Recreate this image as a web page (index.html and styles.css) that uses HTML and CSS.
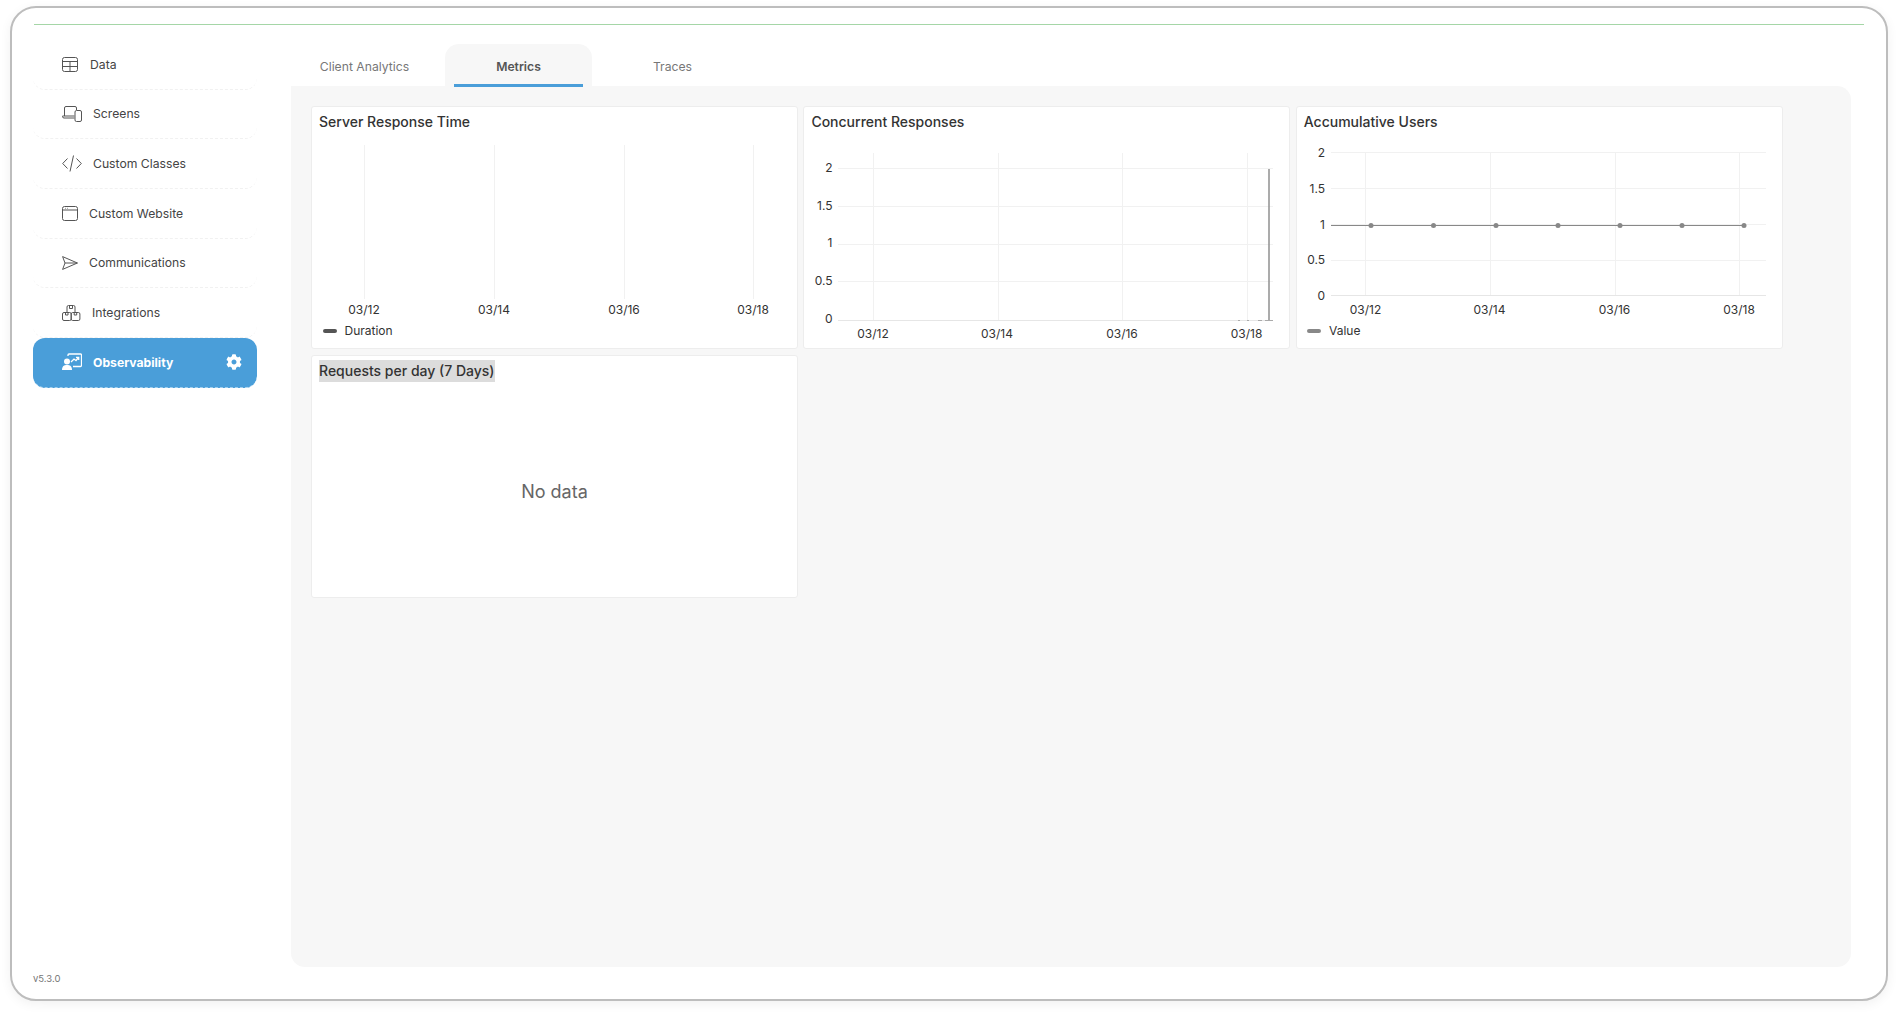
FILE: index.html
```html
<!DOCTYPE html>
<html lang="en">
<head>
<meta charset="utf-8">
<title>Observability</title>
<link rel="stylesheet" href="styles.css">
</head>
<body>
<div class="frame">
  <div class="topline"></div>
  <div class="shell">
    <aside class="sidebar">
      <nav class="nav">
        <a class="nav-item"><svg class="ic" width="17" height="15" viewBox="0 0 17 15"><rect x=".5" y=".5" width="15" height="14" rx="2"/><path d="M.5 4.500h15M.5 9.500h15M8 4.500v10"/></svg><span>Data</span></a>
        <a class="nav-item"><svg class="ic" width="20" height="16" viewBox="0 0 20 16"><path d="M2.500 10V2a1.500 1.500 0 0 1 1.500-1.500h9A1.500 1.500 0 0 1 14.500 2v2M12.500 12H2a1.500 1.500 0 0 1-1.500-1.500v-.5h12"/><rect x="13" y="4.500" width="6.500" height="11" rx="1.500"/></svg><span>Screens</span></a>
        <a class="nav-item"><svg class="ic" width="20" height="17" viewBox="0 0 20 17"><path d="M5.500 3.500L.7 8.500l4.800 5M14.500 3.500l4.800 5-4.800 5M11.500 .5L8 16.500"/></svg><span>Custom Classes</span></a>
        <a class="nav-item"><svg class="ic" width="16" height="15" viewBox="0 0 16 15"><rect x=".5" y=".5" width="15" height="14" rx="2"/><path d="M.5 4h15M3 2.300h.6M5 2.300h.6"/></svg><span>Custom Website</span></a>
        <a class="nav-item"><svg class="ic" width="16" height="14" viewBox="0 0 16 14"><path d="M.6.6L15.400 7 .6 13.400 3 7zM3 7h12.400"/></svg><span>Communications</span></a>
        <a class="nav-item"><svg class="ic" width="19" height="16" viewBox="0 0 19 16"><path d="M5 7.500V2a1.500 1.500 0 0 1 1.500-1.500h5A1.500 1.500 0 0 1 13 2v5.500M7.500.5v3h3v-3"/><rect x=".5" y="7.500" width="8.700" height="8" rx="1.500"/><rect x="9.200" y="7.500" width="8.700" height="8" rx="1.500"/><path d="M3.500 7.500v2.500h2.500V7.500M12.200 7.500v2.500h2.500V7.500"/></svg><span>Integrations</span></a>
        <a class="nav-item active"><svg class="ic-active" width="20" height="18" viewBox="0 0 20 18"><path class="ic-line" d="M6 3V2a1 1 0 0 1 1-1h11.500a1 1 0 0 1 1 1v10.500a1 1 0 0 1-1 1H11"/><path class="ic-line" d="M9 9l3-3 2 1.500L16.500 4.500M14 4.300h2.700V7"/><circle cx="5" cy="8.500" r="3"/><path d="M0 17c0-3.700 2-5 5-5s5 1.300 5 5z"/></svg><span>Observability</span><svg class="gear" width="16" height="16" viewBox="0 0 512 512"><path d="M487.4 315.700l-42.600-24.600c4.300-23.200 4.300-47 0-70.200l42.600-24.600c4.900-2.800 7.100-8.600 5.500-14-11.100-35.600-30-67.800-54.700-94.600-3.800-4.100-10-5.100-14.800-2.300L380.800 110c-17.900-15.400-38.500-27.300-60.800-35.100V25.800c0-5.600-3.900-10.500-9.400-11.700-36.700-8.200-74.300-7.800-109.200 0-5.500 1.200-9.400 6.100-9.400 11.700V75c-22.200 7.900-42.800 19.800-60.800 35.100L88.700 85.500c-4.900-2.800-11-1.900-14.800 2.300-24.700 26.700-43.600 58.900-54.700 94.600-1.700 5.400.6 11.200 5.500 14L67.300 221c-4.300 23.200-4.300 47 0 70.200l-42.600 24.600c-4.900 2.800-7.100 8.600-5.500 14 11.100 35.600 30 67.800 54.700 94.600 3.800 4.100 10 5.100 14.800 2.300l42.600-24.600c17.900 15.400 38.500 27.300 60.800 35.100v49.200c0 5.600 3.900 10.500 9.400 11.700 36.700 8.200 74.300 7.800 109.200 0 5.500-1.200 9.400-6.100 9.400-11.700v-49.200c22.200-7.900 42.800-19.800 60.800-35.100l42.600 24.600c4.900 2.800 11 1.900 14.800-2.300 24.700-26.700 43.600-58.900 54.700-94.600 1.500-5.500-.7-11.300-5.600-14.100zM256 336c-44.100 0-80-35.900-80-80s35.900-80 80-80 80 35.900 80 80-35.900 80-80 80z"/></svg></a>
      </nav>
      <div class="version">v5.3.0</div>
    </aside>
    <main class="main">
      <div class="tabs">
        <div class="tab">Client Analytics</div>
        <div class="tab tab-active">Metrics</div>
        <div class="tab">Traces</div>
      </div>
      <section class="panel">
        <div class="grid">
          <article class="card">
            <h3 class="card-title"><span>Server Response Time</span></h3>
            <svg class="chart" width="485" height="211" viewBox="312 137 485 211">
              <path class="grid-line" d="M364.500 145v154M494.500 145v154M624.500 145v154M753.500 145v154"/>
              <text class="tick mid" x="364" y="313.500">03/12</text>
              <text class="tick mid" x="494" y="313.500">03/14</text>
              <text class="tick mid" x="624" y="313.500">03/16</text>
              <text class="tick mid" x="753" y="313.500">03/18</text>
              <rect class="swatch-dark" x="323" y="329" width="14" height="4" rx="2"/>
              <text class="tick" x="344.500" y="335">Duration</text>
            </svg>
          </article>
          <article class="card">
            <h3 class="card-title"><span>Concurrent Responses</span></h3>
            <svg class="chart" width="485" height="211" viewBox="804 137 485 211">
              <path class="grid-line" d="M873.500 153v167M998.500 153v167M1122.500 153v167M1247.500 153v167M838 168.500h435M838 206.500h435M838 244.500h435M838 281.500h435"/>
              <path class="base-line" d="M838 320.500h435"/>
              <text class="tick end" x="832.500" y="172">2</text>
              <text class="tick end" x="832.500" y="209.500">1.5</text>
              <text class="tick end" x="832.500" y="247">1</text>
              <text class="tick end" x="832.500" y="285">0.5</text>
              <text class="tick end" x="832.500" y="323">0</text>
              <text class="tick mid" x="873" y="337.500">03/12</text>
              <text class="tick mid" x="997" y="337.500">03/14</text>
              <text class="tick mid" x="1122" y="337.500">03/16</text>
              <text class="tick mid" x="1246.500" y="337.500">03/18</text>
              <path class="series" d="M1269 169v151.500"/>
              <path class="series-thin" d="M1238 320.500h2M1247 320.500h2M1258 320.500h4M1265 320.500h8"/>
            </svg>
          </article>
          <article class="card">
            <h3 class="card-title"><span>Accumulative Users</span></h3>
            <svg class="chart" width="485" height="211" viewBox="1297 137 485 211">
              <path class="grid-line" d="M1365.500 153v143M1490.500 153v143M1615.500 153v143M1739.500 153v143M1331 152.500h435M1331 188.500h435M1331 224.500h435M1331 260.500h435"/>
              <path class="base-line" d="M1331 295.500h435"/>
              <text class="tick end" x="1325" y="156.500">2</text>
              <text class="tick end" x="1325" y="192.500">1.5</text>
              <text class="tick end" x="1325" y="228.500">1</text>
              <text class="tick end" x="1325" y="264">0.5</text>
              <text class="tick end" x="1325" y="299.500">0</text>
              <text class="tick mid" x="1365.500" y="313.500">03/12</text>
              <text class="tick mid" x="1489.500" y="313.500">03/14</text>
              <text class="tick mid" x="1614.500" y="313.500">03/16</text>
              <text class="tick mid" x="1739" y="313.500">03/18</text>
              <path class="series-line" d="M1331 225.500h413"/>
              <g class="dots">
                <circle cx="1371" cy="225.500" r="2.500"/>
                <circle cx="1433.500" cy="225.500" r="2.500"/>
                <circle cx="1496" cy="225.500" r="2.500"/>
                <circle cx="1558" cy="225.500" r="2.500"/>
                <circle cx="1620" cy="225.500" r="2.500"/>
                <circle cx="1682" cy="225.500" r="2.500"/>
                <circle cx="1744" cy="225.500" r="2.500"/>
              </g>
              <rect class="swatch-grey" x="1307" y="329" width="14" height="4" rx="2"/>
              <text class="tick" x="1329" y="335">Value</text>
            </svg>
          </article>
          <article class="card">
            <h3 class="card-title"><span class="selected">Requests per day (7 Days)</span></h3>
            <div class="empty">No data</div>
          </article>
        </div>
      </section>
    </main>
  </div>
</div>
</body>
</html>
```

FILE: styles.css
```css
* { box-sizing: border-box; }
html, body { margin: 0; height: 100%; background: #fff; overflow: hidden; }
body { font-family: "Inter", "Liberation Sans", sans-serif; color: #333; }

.frame {
  display: flex;
  flex-direction: column;
  width: 1878px;
  height: 995px;
  margin: 6px 0 0 10px;
  padding-top: 16px;
  background: #fff;
  border: 2px solid #bdbdbd;
  border-radius: 26px;
  box-shadow: 0 3px 12px rgba(0, 0, 0, .06);
}
.topline { flex: none; height: 1px; margin: 0 22px 0 22px; background: #a5d6a7; }

.shell { flex: 1; display: flex; min-height: 0; }

.sidebar {
  flex: none;
  display: flex;
  flex-direction: column;
  width: 279px;
  padding: 15px 34px 14px 21px;
}
.nav { display: flex; flex-direction: column; }
.nav-item {
  display: flex;
  align-items: center;
  gap: 11px;
  height: 49.67px;
  padding-left: 29px;
  font-size: 12.2px;
  color: #444;
  border-bottom: 1px dashed #f1f1f1;
  border-radius: 12px;
}
.ic { flex: none; fill: none; stroke: #555; stroke-width: 1; }
.ic-active { flex: none; fill: #fff; }
.ic-line { fill: none; stroke: #fff; stroke-width: 1.3; }
.active { background: #4a9ed9; color: #fff; font-weight: 700; padding-right: 15px; border-bottom-color: #a3d0ef; }
.gear { margin-left: auto; fill: #fff; }
.version { margin-top: auto; font-size: 9.5px; line-height: 13px; color: #777; }

.main { flex: none; display: flex; flex-direction: column; width: 1560px; padding-top: 19px; padding-bottom: 32px; }
.tabs { flex: none; display: flex; gap: 7px; height: 42px; }
.tab {
  position: relative;
  display: flex;
  align-items: center;
  justify-content: center;
  width: 147px;
  padding-top: 2px;
  font-size: 12.2px;
  color: #777;
  border-radius: 14px 14px 0 0;
}
.tab-active { background: #f7f7f7; color: #555; font-weight: 600; }
.tab-active::after {
  content: "";
  position: absolute;
  left: 9px;
  right: 9px;
  bottom: -1px;
  height: 3px;
  background: #4a9ed9;
}

.panel { flex: 1; padding: 20px; background: #f7f7f7; border-radius: 0 14px 14px 14px; }
.grid { display: grid; grid-template-columns: repeat(3, 487px); grid-auto-rows: 243px; column-gap: 5.4px; row-gap: 6px; }
.card { display: flex; flex-direction: column; background: #fff; border: 1px solid #ededed; border-radius: 3px; }
.card-title { flex: none; height: 30px; margin: 0; padding: 6px 7px 0; font-size: 14px; font-weight: 500; line-height: 17px; color: #333; }
.selected { display: inline-block; margin-top: -2px; padding: 2px 0; background: #dcdcdc; line-height: 18px; }
.chart { display: block; }

.grid-line { fill: none; stroke: #f1f1f1; stroke-width: 1; }
.base-line { fill: none; stroke: #e6e6e6; stroke-width: 1; }
.tick { font-family: "Inter", "Liberation Sans", sans-serif; font-size: 12px; fill: #333; }
.mid { text-anchor: middle; }
.end { text-anchor: end; }
.series { fill: none; stroke: #8f8f8f; stroke-width: 1.5; }
.series-thin { fill: none; stroke: #aaa; stroke-width: 1; }
.series-line { fill: none; stroke: #888; stroke-width: 1.2; }
.dots { fill: #888; }
.swatch-dark { fill: #555; }
.swatch-grey { fill: #888; }

.empty { flex: 1; display: flex; align-items: center; justify-content: center; font-size: 18px; color: #666; }
```
